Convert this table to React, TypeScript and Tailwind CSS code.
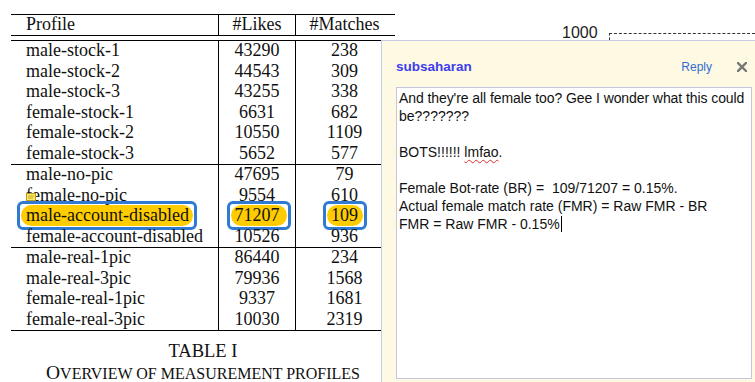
import React from 'react';

type Row = { name: string; likes: string; matches: string; mark?: boolean; note?: boolean };

const groups: Row[][] = [
  [
    { name: 'male-stock-1', likes: '43290', matches: '238' },
    { name: 'male-stock-2', likes: '44543', matches: '309' },
    { name: 'male-stock-3', likes: '43255', matches: '338' },
    { name: 'female-stock-1', likes: '6631', matches: '682' },
    { name: 'female-stock-2', likes: '10550', matches: '1109' },
    { name: 'female-stock-3', likes: '5652', matches: '577' },
  ],
  [
    { name: 'male-no-pic', likes: '47695', matches: '79' },
    { name: 'female-no-pic', likes: '9554', matches: '610', note: true },
    { name: 'male-account-disabled', likes: '71207', matches: '109', mark: true },
    { name: 'female-account-disabled', likes: '10526', matches: '936' },
  ],
  [
    { name: 'male-real-1pic', likes: '86440', matches: '234' },
    { name: 'male-real-3pic', likes: '79936', matches: '1568' },
    { name: 'female-real-1pic', likes: '9337', matches: '1681' },
    { name: 'female-real-3pic', likes: '10030', matches: '2319' },
  ],
];

const serif = { fontFamily: '"Liberation Serif", "Times New Roman", serif' };
const sans = { fontFamily: '"Liberation Sans", Arial, sans-serif' };

// blue rounded outline with yellow pill behind the text
const Mark: React.FC<{ left: number; width: number }> = ({ left, width }) => (
  <div
    className="absolute top-[-5px] h-[29px] rounded-[6px] border-[3px] border-[#2f7bd2] p-[1px]"
    style={{ left, width }}
  >
    <div className="h-full w-full rounded-full bg-[#ffcc00]" />
  </div>
);

const NoteIcon = () => (
  <svg className="absolute left-[15px] top-[7px]" width="10" height="8" viewBox="0 0 10 8">
    <rect x="0.5" y="0.5" width="9" height="7" fill="#fce86a" stroke="#b99a1a" />
    <line x1="2" y1="3" x2="8" y2="3" stroke="#b99a1a" strokeWidth="0.8" />
    <line x1="2" y1="5" x2="7" y2="5" stroke="#b99a1a" strokeWidth="0.8" />
  </svg>
);

const ProfileTable = () => (
  <div className="w-[384px] text-[18px] text-[#111]" style={serif}>
    {/* header */}
    <div className="grid h-[22px] grid-cols-[207px_77px_100px] border-y border-black leading-[18px]">
      <div className="pl-[15px]">Profile</div>
      <div className="border-l border-black text-center">#Likes</div>
      <div className="border-l border-black pr-[2px] text-center">#Matches</div>
    </div>
    <div className="h-[4px]" />
    {/* body */}
    <div className="border-y border-black">
      {groups.map((rows, gi) => (
        <div key={gi} className={gi > 0 ? 'border-t border-black' : ''}>
          {rows.map((r) => (
            <div key={r.name} className="grid h-[20.5px] grid-cols-[207px_77px_100px] leading-[19px]">
              <div className="relative pl-[15px] whitespace-nowrap">
                {r.mark && <Mark left={6} width={180} />}
                <span className="relative">{r.name}</span>
                {r.note && <NoteIcon />}
              </div>
              <div className="relative border-l border-black text-center">
                {r.mark && <Mark left={8} width={64} />}
                <span className="relative">{r.likes}</span>
              </div>
              <div className="relative border-l border-black pr-[2px] text-center">
                {r.mark && <Mark left={27} width={44} />}
                <span className="relative">{r.matches}</span>
              </div>
            </div>
          ))}
        </div>
      ))}
    </div>
    {/* caption */}
    <div className="mt-[9px] text-center text-[18.5px] leading-[22px]">TABLE I</div>
    <div className="text-center leading-[22px] whitespace-nowrap">
      <span className="text-[19.5px]">O</span>
      <span className="text-[16px]">VERVIEW OF MEASUREMENT PROFILES</span>
    </div>
  </div>
);

const CommentPanel = () => (
  <div
    className="absolute left-[381px] top-[40px] h-[360px] w-[390px] border border-[#c9cbe8] bg-[#fef9e2] pl-[14px] pt-[16px]"
    style={sans}
  >
    <div className="flex h-[20px] w-[356px] items-center">
      <span className="flex-1 text-[13.5px] font-bold text-[#3d3df0]">subsaharan</span>
      <span className="text-[12px] text-[#2f6fd3]">Reply</span>
      <svg className="ml-[25px] mr-[5px]" width="10" height="10" viewBox="0 0 10 10">
        <path d="M1 1L9 9M9 1L1 9" stroke="#777" strokeWidth="2.4" strokeLinecap="square" />
      </svg>
    </div>
    <div className="mt-[10px] h-[292px] w-[356px] border border-[#c5c6dc] bg-white pl-[2px] pt-[1px] text-[14px] leading-[18px] text-[#111] whitespace-nowrap">
      <div className="tracking-[-0.08px]">And they're all female too? Gee I wonder what this could</div>
      <div>be???????</div>
      <div>&nbsp;</div>
      <div>
        BOTS!!!!!!{' '}
        <span className="underline decoration-wavy decoration-[#e0302a] decoration-1 underline-offset-2">lmfao</span>.
      </div>
      <div>&nbsp;</div>
      <div className="whitespace-pre">Female Bot-rate (BR) =  109/71207 = 0.15%.</div>
      <div>Actual female match rate (FMR) = Raw FMR - BR</div>
      <div className="flex items-center">
        FMR = Raw FMR - 0.15%
        <span className="ml-[1px] inline-block h-[16px] w-[1px] bg-black" />
      </div>
    </div>
  </div>
);

export default function App() {
  return (
    <div className="relative flex h-[382px] w-[755px] overflow-hidden bg-white">
      <div className="w-[395px] shrink-0 pl-[11px] pt-[14px]">
        <ProfileTable />
      </div>

      {/* axis label of the figure to the right */}
      <div className="flex-1 pt-[23px]">
        <div className="flex items-start">
          <span className="ml-[167px] text-[16px] leading-[20px] text-[#222]" style={sans}>
            1000
          </span>
          <div className="ml-[11px] mt-[10px] h-[7px] flex-1 border-l border-t border-dashed border-[#333]" />
        </div>
      </div>

      <CommentPanel />
    </div>
  );
}
